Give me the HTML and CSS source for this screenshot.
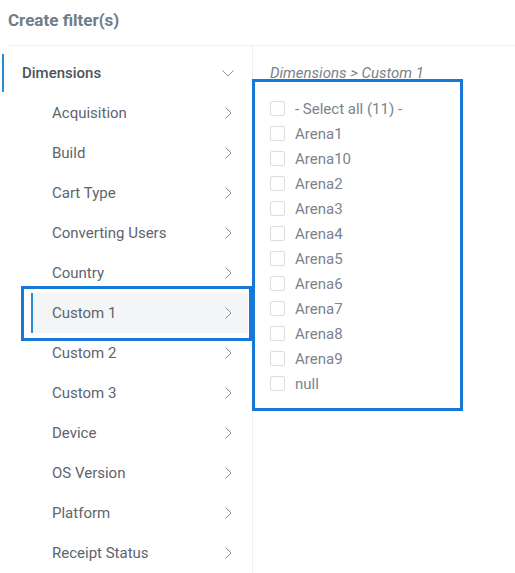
FILE: index.html
```html
<!DOCTYPE html>
<html>
<head>
<meta charset="utf-8">
<link rel="stylesheet" href="styles.css">
</head>
<body>
<div class="page">
  <header class="header">Create filter(s)</header>
  <div class="main">
    <aside class="left">
      <div class="group">
        <span>Dimensions</span>
        <svg class="chev-down" width="12" height="7" viewBox="0 0 12 7"><path d="M0.5 0.5 L6 6 L11.5 0.5" fill="none" stroke="#8b929a" stroke-width="1"/></svg>
      </div>
      <ul class="items">
        <li class="item"><span>Acquisition</span><svg class="chev" width="7" height="12" viewBox="0 0 7 12"><path d="M0.5 0.5 L6 6 L0.5 11.5" fill="none" stroke="#8b929a" stroke-width="1"/></svg></li>
        <li class="item"><span>Build</span><svg class="chev" width="7" height="12" viewBox="0 0 7 12"><path d="M0.5 0.5 L6 6 L0.5 11.5" fill="none" stroke="#8b929a" stroke-width="1"/></svg></li>
        <li class="item"><span>Cart Type</span><svg class="chev" width="7" height="12" viewBox="0 0 7 12"><path d="M0.5 0.5 L6 6 L0.5 11.5" fill="none" stroke="#8b929a" stroke-width="1"/></svg></li>
        <li class="item"><span>Converting Users</span><svg class="chev" width="7" height="12" viewBox="0 0 7 12"><path d="M0.5 0.5 L6 6 L0.5 11.5" fill="none" stroke="#8b929a" stroke-width="1"/></svg></li>
        <li class="item"><span>Country</span><svg class="chev" width="7" height="12" viewBox="0 0 7 12"><path d="M0.5 0.5 L6 6 L0.5 11.5" fill="none" stroke="#8b929a" stroke-width="1"/></svg></li>
        <li class="item active"><span>Custom 1</span><svg class="chev" width="7" height="12" viewBox="0 0 7 12"><path d="M0.5 0.5 L6 6 L0.5 11.5" fill="none" stroke="#8b929a" stroke-width="1"/></svg><div class="mark mark-left"></div></li>
        <li class="item"><span>Custom 2</span><svg class="chev" width="7" height="12" viewBox="0 0 7 12"><path d="M0.5 0.5 L6 6 L0.5 11.5" fill="none" stroke="#8b929a" stroke-width="1"/></svg></li>
        <li class="item"><span>Custom 3</span><svg class="chev" width="7" height="12" viewBox="0 0 7 12"><path d="M0.5 0.5 L6 6 L0.5 11.5" fill="none" stroke="#8b929a" stroke-width="1"/></svg></li>
        <li class="item"><span>Device</span><svg class="chev" width="7" height="12" viewBox="0 0 7 12"><path d="M0.5 0.5 L6 6 L0.5 11.5" fill="none" stroke="#8b929a" stroke-width="1"/></svg></li>
        <li class="item"><span>OS Version</span><svg class="chev" width="7" height="12" viewBox="0 0 7 12"><path d="M0.5 0.5 L6 6 L0.5 11.5" fill="none" stroke="#8b929a" stroke-width="1"/></svg></li>
        <li class="item"><span>Platform</span><svg class="chev" width="7" height="12" viewBox="0 0 7 12"><path d="M0.5 0.5 L6 6 L0.5 11.5" fill="none" stroke="#8b929a" stroke-width="1"/></svg></li>
        <li class="item"><span>Receipt Status</span><svg class="chev" width="7" height="12" viewBox="0 0 7 12"><path d="M0.5 0.5 L6 6 L0.5 11.5" fill="none" stroke="#8b929a" stroke-width="1"/></svg></li>
      </ul>
    </aside>
    <section class="right">
      <div class="crumb">Dimensions &gt; Custom 1</div>
      <ul class="values">
        <li class="value"><span class="box"></span>- Select all (11) -</li>
        <li class="value"><span class="box"></span>Arena1</li>
        <li class="value"><span class="box"></span>Arena10</li>
        <li class="value"><span class="box"></span>Arena2</li>
        <li class="value"><span class="box"></span>Arena3</li>
        <li class="value"><span class="box"></span>Arena4</li>
        <li class="value"><span class="box"></span>Arena5</li>
        <li class="value"><span class="box"></span>Arena6</li>
        <li class="value"><span class="box"></span>Arena7</li>
        <li class="value"><span class="box"></span>Arena8</li>
        <li class="value"><span class="box"></span>Arena9</li>
        <li class="value"><span class="box"></span>null</li>
      </ul>
      <div class="mark mark-right"></div>
    </section>
  </div>
</div>
</body>
</html>
```

FILE: styles.css
```css
* { box-sizing: border-box; }
html, body { margin: 0; padding: 0; background: #fff; }
body {
  font-family: Roboto, "Liberation Sans", Arial, sans-serif;
  width: 515px;
  height: 573px;
  overflow: hidden;
}
ul { list-style: none; margin: 0; padding: 0; }

.header {
  height: 46px;
  margin-left: 8px;
  padding-top: 10px;
  font-size: 17px;
  font-weight: 700;
  color: #717c89;
  border-bottom: 1px solid #eef0f2;
  line-height: 20px;
}

.main {
  display: flex;
  height: 527px;
}

.left {
  width: 253px;
  flex: none;
  border-right: 1px solid #eef0f2;
  padding-top: 8px;
  padding-right: 4px;
}

.group {
  height: 38px;
  margin-bottom: 1px;
  margin-left: 2px;
  border-left: 2px solid #2a8bd0;
  display: flex;
  align-items: center;
  justify-content: space-between;
  font-size: 15px;
  font-weight: 500;
  color: #4a5360;
  position: relative;
}
.group::before {
  content: "";
  position: absolute;
  left: 3px;
  right: 0;
  top: 0;
  bottom: 0;
  background: #f4f5f7;
  z-index: -1;
}
.group span { padding-left: 18px; }
.chev-down { margin-right: 14px; }

.item {
  height: 40px;
  margin-left: 31px;
  border-left: 2px solid transparent;
  display: flex;
  align-items: center;
  justify-content: space-between;
  font-size: 15px;
  color: #5d646e;
  position: relative;
}
.item span { padding-left: 19px; }
.chev { margin-right: 16px; }
.item.active {
  background: #f4f5f7;
  border-left-color: #2a8bd0;
}

.right {
  flex: 1;
  position: relative;
  padding-left: 17px;
  padding-top: 18px;
}

.crumb {
  font-size: 15px;
  font-style: italic;
  color: #7a818a;
  line-height: 18px;
  height: 18px;
}

.values { margin-top: 14px; }
.value {
  height: 25px;
  display: flex;
  align-items: center;
  font-size: 15px;
  color: #7b838f;
}
.box {
  width: 15px;
  height: 15px;
  border: 1px solid #dadde1;
  border-radius: 2px;
  margin-right: 10px;
  flex: none;
}

.mark {
  position: absolute;
  border: 3px solid #1778d8;
  pointer-events: none;
}
.mark-left {
  left: -12px;
  top: -7px;
  width: 231px;
  height: 55px;
}
.mark-right {
  left: -1px;
  top: 33px;
  width: 211px;
  height: 332px;
}
```
